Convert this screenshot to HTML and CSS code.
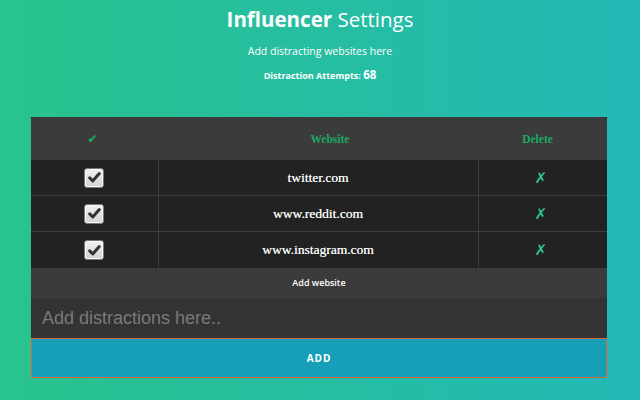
FILE: index.html
```html
<!DOCTYPE html>
<html>
<head>
<meta charset="utf-8">
<link rel="stylesheet" href="styles.css">
</head>
<body>
<header class="intro">
  <h1 class="title"><strong>Influencer</strong> Settings</h1>
  <p class="sub">Add distracting websites here</p>
  <p class="attempts">Distraction Attempts: <span class="count">68</span></p>
</header>
<main class="panel">
  <table class="sites">
    <colgroup><col class="c1"><col class="c2"><col class="c3"></colgroup>
    <thead>
      <tr><th class="h-check">✔</th><th class="h-site">Website</th><th class="h-del">Delete</th></tr>
    </thead>
    <tbody>
      <tr><td><span class="box"><svg viewBox="0 0 12 12" width="13" height="13"><path d="M1.6 6.4 L4.4 9.2 L10.4 2.4" fill="none" stroke="#333" stroke-width="2.8" stroke-linecap="round" stroke-linejoin="round"/></svg></span></td><td class="site">twitter.com</td><td class="del">✗</td></tr>
      <tr><td><span class="box"><svg viewBox="0 0 12 12" width="13" height="13"><path d="M1.6 6.4 L4.4 9.2 L10.4 2.4" fill="none" stroke="#333" stroke-width="2.8" stroke-linecap="round" stroke-linejoin="round"/></svg></span></td><td class="site">www.reddit.com</td><td class="del">✗</td></tr>
      <tr><td><span class="box"><svg viewBox="0 0 12 12" width="13" height="13"><path d="M1.6 6.4 L4.4 9.2 L10.4 2.4" fill="none" stroke="#333" stroke-width="2.8" stroke-linecap="round" stroke-linejoin="round"/></svg></span></td><td class="site">www.instagram.com</td><td class="del">✗</td></tr>
    </tbody>
  </table>
  <div class="add-label">Add website</div>
  <input class="entry" type="text" placeholder="Add distractions here..">
  <button class="add-btn">ADD</button>
</main>
</body>
</html>
```
FILE: styles.css
```css
html, body {
  margin: 0;
  padding: 0;
}
body {
  width: 640px;
  height: 400px;
  overflow: hidden;
  background: linear-gradient(to right, #29c38d, #23b8b5);
  font-family: "Open Sans", sans-serif;
  color: #fff;
}
.intro {
  text-align: center;
  padding-top: 5px;
}
.title {
  margin: 0;
  font-size: 20.5px;
  font-weight: 400;
  line-height: 28px;
}
.title strong {
  font-weight: 700;
}
.sub {
  margin: 10px 0 0;
  font-size: 10.5px;
  line-height: 16px;
}
.attempts {
  margin: 8px 0 0;
  font-size: 9px;
  font-weight: 700;
  line-height: 16px;
}
.count {
  font-size: 11.5px;
}
.panel {
  margin: 33px 0 0 31px;
  width: 576px;
  display: flex;
  flex-direction: column;
}
.sites {
  width: 576px;
  border-collapse: collapse;
  table-layout: fixed;
  background: #222;
  font-family: "Liberation Serif", serif;
}
.c1 { width: 127px; }
.c2 { width: 320px; }
.c3 { width: 129px; }
.sites thead tr {
  background: #3b3b3b;
  height: 43px;
}
.sites th {
  color: #1ea862;
  font-size: 11.5px;
  font-weight: 700;
  padding: 0;
  border: none;
}
.sites th.h-check {
  font-family: "DejaVu Sans", sans-serif;
  font-size: 12px;
  padding-right: 4px;
}
.sites th.h-site {
  padding-left: 24px;
}
.sites th.h-del {
  padding-right: 10px;
}
.sites thead th:first-child {
  border-top-left-radius: 3px;
}
.sites thead th:last-child {
  border-top-right-radius: 3px;
}
.sites td {
  height: 35px;
  padding: 0;
  text-align: center;
  border: 1px solid #3e3e3e;
  border-top: none;
}
.sites td:first-child { border-left: none; }
.sites td:last-child { border-right: none; }
.sites tbody tr:last-child td {
  border-bottom: none;
  height: 36px;
}
.site {
  font-size: 13.5px;
  color: #fff;
  text-shadow: 0.3px 0 0 rgba(255,255,255,0.7);
}
.del {
  color: #2cc58a;
  font-family: "DejaVu Sans", sans-serif;
  font-size: 15px;
  font-weight: 700;
  padding-right: 4px !important;
}
.box {
  display: inline-flex;
  align-items: center;
  justify-content: center;
  width: 18px;
  height: 18px;
  border: 1px solid #777;
  border-radius: 3px;
  background: linear-gradient(#f2f2f2, #d2d2d2);
  box-shadow: inset 0 0 0 1px #fafafa;
  vertical-align: middle;
}
.add-label {
  height: 30px;
  line-height: 30px;
  background: #3b3b3b;
  text-align: center;
  font-size: 9px;
  font-weight: 600;
}
.entry {
  box-sizing: border-box;
  height: 40px;
  width: 576px;
  margin: 0;
  border: none;
  outline: none;
  background: #333;
  padding: 0 11px;
  font-family: "Liberation Sans", sans-serif;
  font-size: 18px;
  color: #ddd;
}
.entry::placeholder {
  color: #7a7a7a;
}
.add-btn {
  box-sizing: border-box;
  height: 40px;
  width: 576px;
  margin: 0;
  border: 1px solid #e0603e;
  border-radius: 0 0 2px 2px;
  background: #169fb6;
  color: #fff;
  font-family: "Open Sans", sans-serif;
  font-weight: 700;
  font-size: 10px;
  letter-spacing: 1px;
}
```
